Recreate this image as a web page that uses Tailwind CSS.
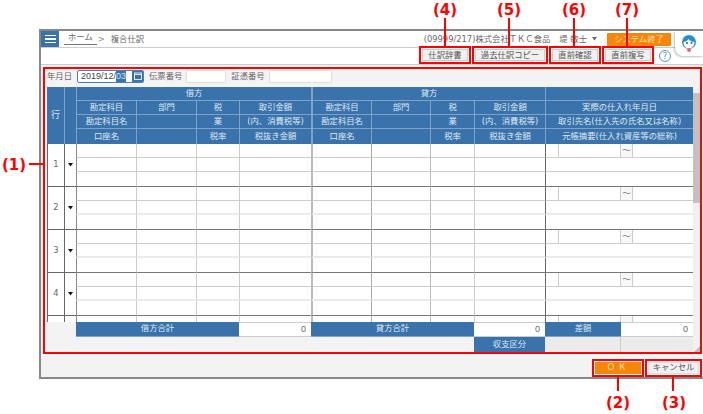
<!DOCTYPE html>
<html lang="ja">
<head>
    <meta charset="UTF-8">
    <title>複合仕訳</title>
    <script src="https://cdn.jsdelivr.net/npm/@tailwindcss/browser@4"></script>
</head>
<body class="bg-white">
<div class="relative w-[703px] h-[414px] overflow-hidden pt-[29px] pl-[39px] text-[8.33px] leading-none text-[#666] font-['DejaVu_Sans','Noto_Sans_CJK_JP',sans-serif]">

    <!-- Window -->
    <div class="relative w-[664px] h-[350px] border-2 border-r-0 border-[#888] bg-[#f3f3f3] flex flex-col">

        <!-- Top bar -->
        <div class="h-[17px] shrink-0 bg-white border-b border-[#ccc] flex items-center pr-[32px]">
            <div class="w-[18px] h-[16px] bg-[#3a73ac] flex flex-col justify-center items-center gap-[2px] self-start">
                <span class="w-[11px] h-[1.5px] bg-white"></span>
                <span class="w-[11px] h-[1.5px] bg-white"></span>
                <span class="w-[11px] h-[1.5px] bg-white"></span>
            </div>
            <span class="ml-[5px] px-[4px] pb-[2px] border-b border-[#777] underline-offset-2">ホーム</span>
            <span class="ml-[1px] text-[#888]">&gt;</span>
            <span class="ml-[6px]">複合仕訳</span>
            <span class="ml-auto">(09999/217)株式会社ＴＫＣ食品</span>
            <span class="ml-[9px]">堤 敬士</span>
            <svg class="ml-[5px] mr-[9px]" width="6" height="4" viewBox="0 0 6 4"><path d="M0 0h5L2.500 3.500z" fill="#666"/></svg>
            <span class="w-[64px] h-[13px] bg-[#f5860a] text-[#ffe0b0] flex items-center justify-center rounded-[1px]">システム終了</span>
        </div>

        <!-- Toolbar -->
        <div class="h-[17px] shrink-0 bg-white border-b border-[#ccc] flex items-start pl-[378px]">
            <div class="-mt-[2px] w-[52px] h-[18px] border-2 border-[#f00] p-px"><button class="w-full h-full bg-[#f0f0f0] border border-[#ccc] text-[#555]">仕訳辞書</button></div>
            <div class="-mt-[2px] ml-px w-[76px] h-[18px] border-2 border-[#f00] p-px"><button class="w-full h-full bg-[#f0f0f0] border border-[#ccc] text-[#555]">過去仕訳コピー</button></div>
            <div class="-mt-[2px] ml-px w-[52px] h-[18px] border-2 border-[#f00] p-px"><button class="w-full h-full bg-[#f0f0f0] border border-[#ccc] text-[#555]">直前確認</button></div>
            <div class="-mt-[2px] ml-px w-[52px] h-[18px] border-2 border-[#f00] p-px"><button class="w-full h-full bg-[#f0f0f0] border border-[#ccc] text-[#555]">直前複写</button></div>
            <span class="ml-[5px] mt-[2px] w-[12px] h-[12px] rounded-full border border-[#5b8fc9] text-[#5b8fc9] text-[9px] flex items-center justify-center">?</span>
        </div>

        <!-- Main panel -->
        <div class="mt-[1.5px] ml-[2px] w-[659px] h-[287px] shrink-0 border-2 border-[#f00] pl-[2px] flex flex-col">
            <div class="h-[18px] shrink-0 flex items-start pt-[1px] whitespace-nowrap">
                <span class="mt-[2px]">年月日</span>
                <div class="ml-[5px] w-[67px] h-[13px] bg-white border border-[#4a7fb5] rounded-[2px] flex items-center font-['Liberation_Sans',sans-serif] text-[9px] text-[#444]">
                    <span class="ml-[3px]">2019/12/</span><span class="bg-[#3a73ac] text-[#cfe0f0] h-full flex items-center">03</span>
                    <span class="ml-auto w-[11px] h-full bg-[#3a73ac] flex items-center justify-center">
                        <svg width="8" height="8" viewBox="0 0 8 8"><rect x="0.500" y="1" width="7" height="6.500" fill="none" stroke="#dce8f4"/><path d="M0 2.500h8" stroke="#dce8f4"/></svg>
                    </span>
                </div>
                <span class="ml-[5px] mt-[2px]">伝票番号</span>
                <span class="ml-[4px] w-[40px] h-[13px] bg-white border border-[#ddd] rounded-[1px]"></span>
                <span class="ml-[5px] mt-[2px]">証憑番号</span>
                <span class="ml-[4px] w-[63px] h-[13px] bg-white border border-[#ddd] rounded-[1px]"></span>
            </div>

            <div class="flex h-[265px]">
                <div class="w-[646px] shrink-0 flex flex-col">
                    <table class="table-fixed border-separate border-spacing-0 w-[646px] text-[#dfe8f2] text-center bg-[#3a73ac]">
                        <colgroup>
                            <col class="w-[17px]"><col class="w-[12px]"><col class="w-[60px]"><col class="w-[60px]"><col class="w-[43px]"><col class="w-[72px]">
                            <col class="w-[60px]"><col class="w-[59px]"><col class="w-[44px]"><col class="w-[71px]"><col class="w-[148px]">
                        </colgroup>
                        <tr class="h-[14px]">
                            <td rowspan="4" class="text-[9px]">行</td>
                            <td rowspan="4" class="border-l border-[#7fa3c8]"></td>
                            <td colspan="4" class="border-l border-[#7fa3c8] border-b">借方</td>
                            <td colspan="4" class="border-l-2 border-[#7fa3c8] border-b">貸方</td>
                            <td class="border-l border-[#7fa3c8] border-b"></td>
                        </tr>
                        <tr class="h-[14px]">
                            <td class="border-l border-b border-[#7fa3c8]">勘定科目</td>
                            <td class="border-l border-b border-[#7fa3c8]">部門</td>
                            <td class="border-l border-b border-[#7fa3c8]">税</td>
                            <td class="border-l border-b border-[#7fa3c8]">取引金額</td>
                            <td class="border-l-2 border-b border-[#7fa3c8]">勘定科目</td>
                            <td class="border-l border-b border-[#7fa3c8]">部門</td>
                            <td class="border-l border-b border-[#7fa3c8]">税</td>
                            <td class="border-l border-b border-[#7fa3c8]">取引金額</td>
                            <td class="border-l border-b border-[#7fa3c8]">実際の仕入れ年月日</td>
                        </tr>
                        <tr class="h-[14px]">
                            <td class="border-l border-b border-[#7fa3c8]">勘定科目名</td>
                            <td class="border-l border-b border-[#7fa3c8]"></td>
                            <td class="border-l border-b border-[#7fa3c8]">業</td>
                            <td class="border-l border-b border-[#7fa3c8]">(内、消費税等)</td>
                            <td class="border-l-2 border-b border-[#7fa3c8]">勘定科目名</td>
                            <td class="border-l border-b border-[#7fa3c8]"></td>
                            <td class="border-l border-b border-[#7fa3c8]">業</td>
                            <td class="border-l border-b border-[#7fa3c8]">(内、消費税等)</td>
                            <td class="border-l border-b border-[#7fa3c8] whitespace-nowrap">取引先名(仕入先の氏名又は名称)</td>
                        </tr>
                        <tr class="h-[15px]">
                            <td class="border-l border-[#7fa3c8]">口座名</td>
                            <td class="border-l border-[#7fa3c8]"></td>
                            <td class="border-l border-[#7fa3c8]">税率</td>
                            <td class="border-l border-[#7fa3c8]">税抜き金額</td>
                            <td class="border-l-2 border-[#7fa3c8]">口座名</td>
                            <td class="border-l border-[#7fa3c8]"></td>
                            <td class="border-l border-[#7fa3c8]">税率</td>
                            <td class="border-l border-[#7fa3c8]">税抜き金額</td>
                            <td class="border-l border-[#7fa3c8] whitespace-nowrap">元帳摘要(仕入れ資産等の総称)</td>
                        </tr>
                    </table>

                    <div class="h-[178px] shrink-0 overflow-hidden">
                        <table class="table-fixed border-separate border-spacing-0 w-[646px] bg-white">
                            <colgroup>
                                <col class="w-[17px]"><col class="w-[12px]"><col class="w-[60px]"><col class="w-[60px]"><col class="w-[43px]"><col class="w-[72px]">
                                <col class="w-[60px]"><col class="w-[59px]"><col class="w-[44px]"><col class="w-[71px]"><col class="w-[148px]">
                            </colgroup>
                            <tbody id="rows"></tbody>
                        </table>
                    </div>

                    <!-- Totals -->
                    <div class="grid grid-cols-[29px_163px_72px_163px_71px_76px_72px] grid-rows-[15px_15px] text-center">
                        <div></div>
                        <div class="bg-[#3a73ac] text-[#dfe8f2] border-b border-[#7fa3c8] flex items-center justify-center">借方合計</div>
                        <div class="bg-white border-y border-[#ccc] flex items-center justify-end pr-[5px] font-['Liberation_Sans',sans-serif] text-[9px]">0</div>
                        <div class="bg-[#3a73ac] text-[#dfe8f2] border-b border-[#7fa3c8] flex items-center justify-center">貸方合計</div>
                        <div class="bg-white border-y border-[#ccc] flex items-center justify-end pr-[5px] font-['Liberation_Sans',sans-serif] text-[9px]">0</div>
                        <div class="bg-[#3a73ac] text-[#dfe8f2] border-b border-[#7fa3c8] flex items-center justify-center">差額</div>
                        <div class="bg-white border-y border-[#ccc] flex items-center justify-end pr-[5px] font-['Liberation_Sans',sans-serif] text-[9px]">0</div>
                        <div class="col-span-4"></div>
                        <div class="bg-[#3a73ac] text-[#dfe8f2] flex items-center justify-center">収支区分</div>
                        <div class="bg-[#ebebeb] border-r border-[#ccc]"></div>
                        <div class="bg-[#ebebeb]"></div>
                    </div>
                </div>

                <!-- Scrollbar -->
                <div class="w-[7px] shrink-0 bg-[#f0f0f0] flex flex-col">
                    <div class="h-[6px]"></div>
                    <div class="h-[110px] bg-[#c1c1c1]"></div>
                    <div class="flex-1 flex items-end justify-end">
                        <svg width="6" height="6" viewBox="0 0 6 6"><path d="M6 0v6H0z" fill="#bbb"/></svg>
                    </div>
                </div>
            </div>
        </div>

        <!-- Dialog buttons -->
        <div class="mt-[5px] flex pl-[551px]">
            <div class="w-[52px] h-[18px] border-2 border-[#f00] p-px"><button class="w-full h-full bg-[#f5860a] text-[#ffe0b0] tracking-[3px]">ＯＫ</button></div>
            <div class="ml-px w-[57px] h-[18px] border-2 border-[#f00] p-px"><button class="w-full h-full bg-[#f0f0f0] border border-[#ddd] text-[#555]">キャンセル</button></div>
        </div>

        <!-- Assistant tab -->
        <div class="absolute right-0 top-0 w-[28px] h-[25px] bg-white rounded-bl-[8px] shadow-[-1px_1px_2px_rgba(0,0,0,0.25)] flex items-center justify-center">
            <svg width="18" height="19" viewBox="0 0 18 19">
                <circle cx="9" cy="8" r="7" fill="#2a8fc4"/>
                <path d="M3.500 8c2 0 4-1 5-3 1 2 3.500 3 6 3 0 4-2.500 6.500-5.500 6.500S3.500 12 3.500 8z" fill="#fff"/>
                <circle cx="7" cy="9" r="1" fill="#1d5f86"/><circle cx="11.500" cy="9" r="1" fill="#1d5f86"/>
                <circle cx="9" cy="16" r="2" fill="#e8608a"/>
            </svg>
        </div>
    </div>

    <!-- Callouts -->
    <div class="absolute left-[432px] top-[3px] w-[26px] text-center text-[15px] font-bold text-[#f00] font-['DejaVu_Sans',sans-serif]">(4)</div>
    <div class="absolute left-[496px] top-[3px] w-[26px] text-center text-[15px] font-bold text-[#f00] font-['DejaVu_Sans',sans-serif]">(5)</div>
    <div class="absolute left-[561px] top-[3px] w-[26px] text-center text-[15px] font-bold text-[#f00] font-['DejaVu_Sans',sans-serif]">(6)</div>
    <div class="absolute left-[614px] top-[3px] w-[26px] text-center text-[15px] font-bold text-[#f00] font-['DejaVu_Sans',sans-serif]">(7)</div>
    <div class="absolute left-[2px] top-[158px] text-[15px] font-bold text-[#f00] font-['DejaVu_Sans',sans-serif]">(1)</div>
    <div class="absolute left-[605px] top-[396px] w-[26px] text-center text-[15px] font-bold text-[#f00] font-['DejaVu_Sans',sans-serif]">(2)</div>
    <div class="absolute left-[661px] top-[396px] w-[26px] text-center text-[15px] font-bold text-[#f00] font-['DejaVu_Sans',sans-serif]">(3)</div>
    <div class="absolute left-[444px] top-[18px] w-[2px] h-[28px] bg-[#f00]"></div>
    <div class="absolute left-[508px] top-[18px] w-[2px] h-[28px] bg-[#f00]"></div>
    <div class="absolute left-[573px] top-[18px] w-[2px] h-[28px] bg-[#f00]"></div>
    <div class="absolute left-[626px] top-[18px] w-[2px] h-[28px] bg-[#f00]"></div>
    <div class="absolute left-[29px] top-[163px] w-[14px] h-[1.5px] bg-[#f00]"></div>
    <div class="absolute left-[617px] top-[376px] w-[2px] h-[15px] bg-[#f00]"></div>
    <div class="absolute left-[672px] top-[376px] w-[2px] h-[15px] bg-[#f00]"></div>
</div>

<script>
    // vertical rule of each plain column, left to right
    const rules = [
        'border-l border-[#ccc]', 'border-l border-[#ccc]', 'border-l border-[#ccc]',
        'border-l-2 border-[#bbb]', 'border-l border-[#aaa]', 'border-l border-[#bbb]', 'border-l border-[#ccc]'
    ];

    // row 5 only shows its top few pixels, so it carries no number or marks
    function subRow(row, line, height) {
        const visible = row < 5;
        let bottom = 'border-b border-b-[#ccc]';
        if (line === 1 && row > 1) bottom = 'border-b-2 border-b-[#ebebeb]';
        if (line === 2) bottom = 'border-b border-b-[#777]';
        const cells = rules.map(r => `<td class="${r} ${bottom}"></td>`).join('');
        let lead = '';
        if (line === 0) {
            lead = `<td rowspan="3" class="border-l border-b border-[#666] text-center text-[#666]">${visible ? row : ''}</td>
                <td rowspan="3" class="border-l border-b border-[#666]">${visible ? '<svg class="mx-auto" width="5" height="4" viewBox="0 0 5 4"><path d="M0 0h5L2.500 3.500z" fill="#111"/></svg>' : ''}</td>`;
        }
        let last = `<td class="border-l border-l-[#666] ${bottom}"></td>`;
        if (line === 0) {
            last = `<td class="border-l border-l-[#666] ${bottom} p-0"><div class="flex h-[13px]">
                <span class="w-[12px]"></span>
                <span class="w-[62px] border-l border-[#ccc]"></span>
                <span class="w-[13px] border-x border-[#ccc] bg-[#f7f7f7] text-center text-[#777] flex items-center justify-center">${visible ? '〜' : ''}</span>
            </div></td>`;
        }
        return `<tr class="${height}">${lead}<td class="border-l border-[#888] ${bottom}"></td>${cells}${last}</tr>`;
    }

    document.getElementById('rows').innerHTML = [1, 2, 3, 4, 5].map(n =>
        subRow(n, 0, 'h-[14px]') + subRow(n, 1, 'h-[14px]') + subRow(n, 2, 'h-[15px]')
    ).join('');
</script>
</body>
</html>
